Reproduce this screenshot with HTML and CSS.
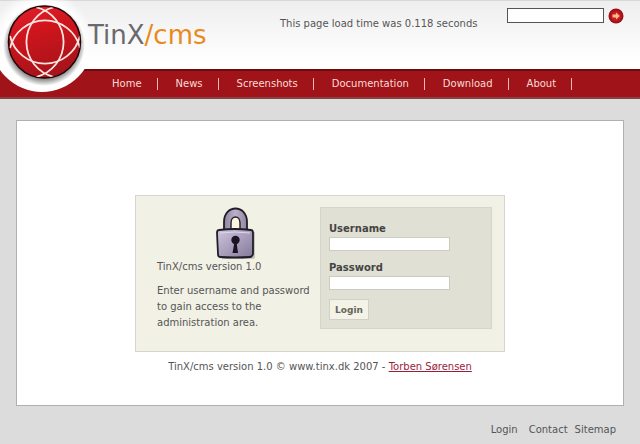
FILE: index.html
```html
<!DOCTYPE html>
<html lang="en">
<head>
<meta charset="utf-8">
<title>TinX/cms</title>
<link rel="stylesheet" href="styles.css">
</head>
<body>
<header class="header">
  <svg class="logo" viewBox="0 0 96 100" width="96" height="100" aria-hidden="true">
    <defs>
      <linearGradient id="ball" x1="0" y1="0" x2="0.3" y2="1"><stop offset="0" stop-color="#e3222f"/><stop offset=".4" stop-color="#d0151c"/><stop offset="1" stop-color="#a9131b"/></linearGradient>
      <radialGradient id="shade"><stop offset=".8" stop-color="#777"/><stop offset="1" stop-color="#777" stop-opacity="0"/></radialGradient>
      <radialGradient id="glow"><stop offset=".75" stop-color="#fff"/><stop offset="1" stop-color="#fff" stop-opacity="0"/></radialGradient>
      <clipPath id="edge"><circle cx="44.500" cy="42" r="35.500"/></clipPath>
      <clipPath id="lower"><rect y="69" width="96" height="31"/></clipPath>
    </defs>
    <circle cx="42" cy="41" r="51" fill="url(#glow)"/>
    <circle cx="42" cy="41" r="51" fill="#fff" clip-path="url(#lower)"/>
    <circle cx="44" cy="45" r="41" fill="url(#shade)"/>
    <circle cx="44.500" cy="42" r="36" fill="url(#ball)" stroke="#210509" stroke-width="1.500"/>
    <g clip-path="url(#edge)" fill="none" stroke="#ffe4df" stroke-width="1.800">
      <path d="M36 7A36 36 0 0 1 36 77M54 7A36 36 0 0 0 54 77"/>
      <path d="M10 48A36 36 0 0 1 80 48M10 36A36 36 0 0 0 80 36"/>
    </g>
  </svg>
  <a class="brand" href="#"><span class="brand-main">TinX</span><span class="brand-accent">/cms</span></a>
  <p class="load-time">This page load time was 0.118 seconds</p>
  <form class="search">
    <input class="search-input" type="text" aria-label="Search">
    <button class="search-button" type="button" aria-label="Go">
      <svg viewBox="0 0 16 16" width="16" height="16" aria-hidden="true">
        <defs><radialGradient id="go"><stop offset="0" stop-color="#e2301f"/><stop offset=".6" stop-color="#c01822"/><stop offset="1" stop-color="#8d0a14"/></radialGradient></defs>
        <circle cx="8" cy="8" r="7.500" fill="url(#go)"/>
        <path d="M4.500 6.500H8V4.600L11.800 8 8 11.400V9.500H4.500z" fill="#ffb98c"/>
      </svg>
    </button>
  </form>
</header>
<nav class="nav">
  <a href="#">Home</a>
  <a href="#">News</a>
  <a href="#">Screenshots</a>
  <a href="#">Documentation</a>
  <a href="#">Download</a>
  <a href="#">About</a>
</nav>
<main class="panel">
  <section class="login">
    <div class="intro">
      <svg class="lock" viewBox="0 0 42 54" width="42" height="54" aria-hidden="true">
        <defs>
          <linearGradient id="body" x1="0" y1="0" x2="1" y2="1"><stop offset="0" stop-color="#cfc6dd"/><stop offset=".45" stop-color="#aea3c0"/><stop offset="1" stop-color="#85799a"/></linearGradient>
          <linearGradient id="bow"><stop offset="0" stop-color="#8e849d"/><stop offset=".5" stop-color="#bcb1cb"/><stop offset="1" stop-color="#8f839e"/></linearGradient>
        </defs>
        <path d="M6 25H41V50Q41 52 38 52H8z" fill="#aaa6a0" opacity=".6"/>
        <path d="M10 24V15C10 -3 33 -3 33 15V24z" fill="url(#bow)" stroke="#201d29" stroke-width="1.800"/>
        <path d="M17 23V16C17 8 26 8 26 16V23z" fill="#fff5df" stroke="#201d29" stroke-width="1.400"/>
        <path d="M5 23Q21 21 37 23Q39 23 39 26L39 47Q38 50 36 50Q21 51 6 50Q4 50 4 47L3 26Q3 23 5 23z" fill="url(#body)" stroke="#201d29" stroke-width="1.800"/>
        <path d="M6 26Q21 24 36 26" stroke="#ded6e9" fill="none"/>
        <circle cx="21.500" cy="33" r="4.200" fill="#1c1424"/>
        <path d="M20.500 35H22.500L24 46H18.500z" fill="#1c1424"/>
      </svg>
      <p>TinX/cms version 1.0</p>
      <p class="hint">Enter username and password to gain access to the administration area.</p>
    </div>
    <form class="fields">
      <label for="user">Username</label>
      <input id="user" type="text">
      <label for="pass">Password</label>
      <input id="pass" type="password">
      <button class="submit" type="button">Login</button>
    </form>
  </section>
  <p class="credit">TinX/cms version 1.0 © www.tinx.dk 2007 - <a href="#">Torben Sørensen</a></p>
</main>
<footer class="footer">
  <a href="#">Login</a>
  <a class="contact" href="#">Contact</a>
  <a href="#">Sitemap</a>
</footer>
</body>
</html>
```
FILE: styles.css
```css
* {
  box-sizing: border-box;
}

body {
  margin: 0;
  background: #dcdcdd;
  color: #555;
  font: 10px/16px "DejaVu Sans", Verdana, sans-serif;
}

p {
  margin: 0;
}

a {
  color: inherit;
  text-decoration: none;
}

.header {
  position: relative;
  display: flex;
  align-items: flex-start;
  height: 69px;
  padding: 0 16px 0 88px;
  border-top: 1px solid #d8d8d8;
  background: linear-gradient(#eeeeef, #fff 90%);
}

.logo {
  position: absolute;
  top: -1px;
  left: 0;
}

.brand {
  position: relative;
  width: 192px;
  padding-top: 18px;
  font-size: 26px;
  line-height: 32px;
}

.brand-main {
  color: #6a6a6e;
}

.brand-accent {
  color: #e88a1c;
}

.load-time {
  padding-top: 15px;
}

.search {
  display: flex;
  gap: 4px;
  margin-left: auto;
  padding-top: 7px;
}

.search-input {
  width: 97px;
  height: 15px;
  padding: 0 2px;
  border: 1px solid #555;
  background: #fff;
  font: inherit;
}

.search-button {
  display: flex;
  width: 16px;
  height: 16px;
  padding: 0;
  border: 0;
  background: none;
}

.nav {
  display: flex;
  align-items: center;
  height: 30px;
  padding-left: 94px;
  border-top: 2px solid #6b0c10;
  border-bottom: 2px solid #884345;
  background: #a01318;
  color: #f8dcd8;
  line-height: 12px;
}

.nav a {
  padding: 0 15px 0 18px;
  border-right: 1px solid #efb9b5;
}

.panel {
  margin: 21px 16px 0;
  padding: 74px 16px 30px;
  border: 1px solid #b0b0b0;
  background: #fff;
}

.login {
  display: flex;
  align-items: flex-start;
  justify-content: space-between;
  max-width: 370px;
  margin: 0 auto;
  padding: 11px 12px 20px 21px;
  border: 1px solid #d5d5cd;
  background: #f1f1e6;
}

.intro {
  width: 156px;
}

.lock {
  display: block;
  margin: 0 auto;
}

.intro p {
  margin-top: -2px;
}

.intro .hint {
  margin-top: 8px;
}

.fields {
  display: flex;
  flex-direction: column;
  align-items: flex-start;
  width: 172px;
  padding: 13px 8px 8px;
  border: 1px solid #d5d5ca;
  background: #e0e0d5;
}

.fields label {
  color: #444;
  font-weight: bold;
}

.fields input {
  width: 121px;
  height: 14px;
  margin-bottom: 9px;
  padding: 0 2px;
  border: 1px solid #ccccc2;
  background: #fff;
  font: inherit;
}

.submit {
  width: 40px;
  height: 21px;
  padding: 0;
  border: 1px solid #d0d0c5;
  background: #f3f3e8;
  color: #666659;
  font: bold 9px/16px "DejaVu Sans", Verdana, sans-serif;
}

.credit {
  padding-top: 7px;
  text-align: center;
}

.credit a {
  color: #9b1c3c;
  text-decoration: underline;
}

.footer {
  display: flex;
  justify-content: flex-end;
  gap: 7px;
  padding: 16px 24px 7px;
}

.contact {
  margin-left: 4px;
}
```
